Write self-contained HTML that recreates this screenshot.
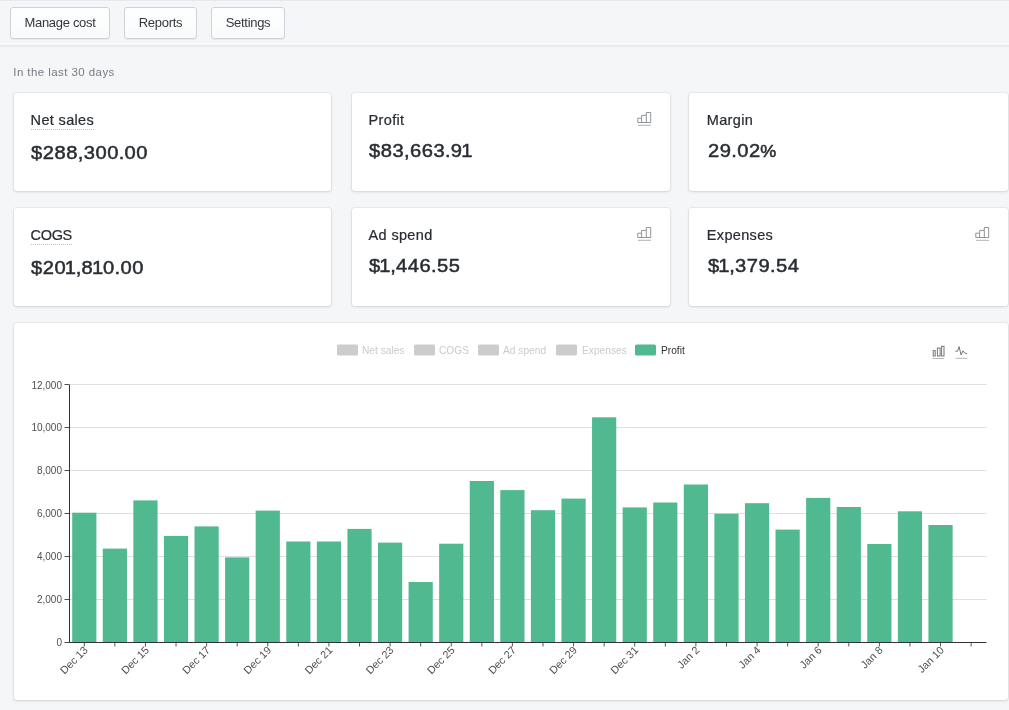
<!DOCTYPE html>
<html><head><meta charset="utf-8"><title>Dashboard</title>
<style>
html,body{margin:0;padding:0}
body{width:1009px;height:710px;overflow:hidden;background:#f4f6f8;font-family:"Liberation Sans",sans-serif;color:#292d32;position:relative}
.topline{position:absolute;left:0;top:0;width:1009px;height:1px;background:#e6e9ec}
.hdr{position:absolute;left:0;top:43px;width:1009px;height:4px;background:linear-gradient(180deg,rgba(255,255,255,.5) 0,rgba(255,255,255,.4) 1.4px,#e9ecef 2.1px,#e4e7eb 2.9px,#eceff2 3.6px,rgba(244,246,248,0) 4px)}
.btn{position:absolute;top:7px;height:31.5px;box-sizing:border-box;border:1px solid #cdd3d9;border-radius:3px;background:linear-gradient(180deg,#fff,#f9fafb);box-shadow:0 1px 0 0 rgba(22,29,37,.05);font-size:13px;line-height:30px;text-align:center;color:#33383e;letter-spacing:-.3px}
.btn span{display:inline-block;transform:translateY(.45px)}
.sub{position:absolute;left:13.3px;top:65px;font-size:11.5px;line-height:14px;color:#757c84;letter-spacing:.43px}
.card{position:absolute;background:#fff;border-radius:3px;box-shadow:0 0 0 1px rgba(63,63,68,.05),0 1px 3px 0 rgba(63,63,68,.15)}
.card .t{position:absolute;left:16.6px;top:19.1px;font-size:14.5px;line-height:17px;letter-spacing:.34px;color:#292d32;white-space:nowrap;-webkit-text-stroke:.22px #292d32}
.card .t.u{border-bottom:1.5px dotted #b9c1c9;padding-bottom:0}
.card .v{position:absolute;left:17.3px;font-size:19px;line-height:22px;letter-spacing:.5px;color:#292d32;white-space:nowrap;-webkit-text-stroke:.5px #292d32;transform:scaleX(1.06);transform-origin:0 50%}
.card .v i{font-style:normal;margin:0 -.7px 0 -1.3px}
.card .v u{text-decoration:none;margin:0 -.2px}
.card .v b{font-weight:normal;font-size:17px;margin-left:-.5px}
.c3 .t{left:17.8px}
.c3 .v{left:18.5px}
.ico{position:absolute;right:17px;top:18px}
.chart{position:absolute;left:0;top:0}
.wrap{position:absolute;left:0;top:0;width:1009px;height:710px;will-change:transform}
.yl{font-family:"Liberation Sans",sans-serif;font-size:10px;fill:#505050}
.xl{font-family:"Liberation Sans",sans-serif;font-size:10.7px;fill:#505050}
.lg{font-family:"Liberation Sans",sans-serif;font-size:10.2px}
</style></head><body>
<div class="wrap">
<div class="topline"></div>
<div class="btn" style="left:10px;width:100px"><span>Manage cost</span></div>
<div class="btn" style="left:124px;width:73px"><span>Reports</span></div>
<div class="btn" style="left:211px;width:74px"><span>Settings</span></div>
<div class="hdr"></div>
<div class="sub">In the last 30 days</div>

<div class="card" style="left:14px;top:93px;width:317px;height:98px"><div class="t u">Net sales</div><div class="v" style="top:48.6px">$288<u>,</u>300<u>.</u>00</div></div>
<div class="card" style="left:352px;top:93px;width:318px;height:98px"><div class="t">Profit</div><div class="v" style="top:47px">$83<u>,</u>663<u>.</u>9<i>1</i></div><svg class="ico" width="16" height="16" viewBox="0 0 16 16"><g stroke="#8a8f94" fill="none" stroke-width="0.95"><path d="M0.8 11.5V7.2H4.6V11.5M4.6 7.2V4.4H9.3V11.5M9.3 4.4V1.5H13.7V11.5H0.8"/><line x1="1" y1="14.3" x2="14" y2="14.3" stroke="#a9adb2"/></g></svg></div>
<div class="card c3" style="left:689px;top:93px;width:319px;height:98px"><div class="t">Margin</div><div class="v" style="top:47px">29<u>.</u>02<b>%</b></div></div>

<div class="card" style="left:14px;top:208px;width:317px;height:98px"><div class="t u" style="letter-spacing:-.35px">COGS</div><div class="v" style="top:48.6px">$20<i>1</i><u>,</u>8<i>1</i>0<u>.</u>00</div></div>
<div class="card" style="left:352px;top:208px;width:318px;height:98px"><div class="t">Ad spend</div><div class="v" style="top:47px">$<i>1</i><u>,</u>446<u>.</u>55</div><svg class="ico" width="16" height="16" viewBox="0 0 16 16"><g stroke="#8a8f94" fill="none" stroke-width="0.95"><path d="M0.8 11.5V7.2H4.6V11.5M4.6 7.2V4.4H9.3V11.5M9.3 4.4V1.5H13.7V11.5H0.8"/><line x1="1" y1="14.3" x2="14" y2="14.3" stroke="#a9adb2"/></g></svg></div>
<div class="card c3" style="left:689px;top:208px;width:319px;height:98px"><div class="t">Expenses</div><div class="v" style="top:47px">$<i>1</i><u>,</u>379<u>.</u>54</div><svg class="ico" width="16" height="16" viewBox="0 0 16 16"><g stroke="#8a8f94" fill="none" stroke-width="0.95"><path d="M0.8 11.5V7.2H4.6V11.5M4.6 7.2V4.4H9.3V11.5M9.3 4.4V1.5H13.7V11.5H0.8"/><line x1="1" y1="14.3" x2="14" y2="14.3" stroke="#a9adb2"/></g></svg></div>

<div class="card" style="left:14px;top:323px;width:994px;height:377px"></div>
<svg class="chart" width="1009" height="710" viewBox="0 0 1009 710">
<line x1="69.0" y1="384.50" x2="986.4" y2="384.50" stroke="#dfdfdf" stroke-width="1"/>
<line x1="64.5" y1="384.50" x2="69.0" y2="384.50" stroke="#3a3a3a" stroke-width="0.9"/>
<text x="62.0" y="388.60" text-anchor="end" class="yl">12,000</text>
<line x1="69.0" y1="427.50" x2="986.4" y2="427.50" stroke="#dfdfdf" stroke-width="1"/>
<line x1="64.5" y1="427.50" x2="69.0" y2="427.50" stroke="#3a3a3a" stroke-width="0.9"/>
<text x="62.0" y="431.43" text-anchor="end" class="yl">10,000</text>
<line x1="69.0" y1="470.50" x2="986.4" y2="470.50" stroke="#dfdfdf" stroke-width="1"/>
<line x1="64.5" y1="470.50" x2="69.0" y2="470.50" stroke="#3a3a3a" stroke-width="0.9"/>
<text x="62.0" y="474.27" text-anchor="end" class="yl">8,000</text>
<line x1="69.0" y1="513.50" x2="986.4" y2="513.50" stroke="#dfdfdf" stroke-width="1"/>
<line x1="64.5" y1="513.50" x2="69.0" y2="513.50" stroke="#3a3a3a" stroke-width="0.9"/>
<text x="62.0" y="517.10" text-anchor="end" class="yl">6,000</text>
<line x1="69.0" y1="556.50" x2="986.4" y2="556.50" stroke="#dfdfdf" stroke-width="1"/>
<line x1="64.5" y1="556.50" x2="69.0" y2="556.50" stroke="#3a3a3a" stroke-width="0.9"/>
<text x="62.0" y="559.93" text-anchor="end" class="yl">4,000</text>
<line x1="69.0" y1="599.50" x2="986.4" y2="599.50" stroke="#dfdfdf" stroke-width="1"/>
<line x1="64.5" y1="599.50" x2="69.0" y2="599.50" stroke="#3a3a3a" stroke-width="0.9"/>
<text x="62.0" y="602.77" text-anchor="end" class="yl">2,000</text>
<line x1="64.5" y1="642.50" x2="69.0" y2="642.50" stroke="#3a3a3a" stroke-width="0.9"/>
<text x="62.0" y="645.60" text-anchor="end" class="yl">0</text>
<rect x="72.19" y="512.70" width="24.2" height="129.30" fill="#50b990"/>
<rect x="102.77" y="548.60" width="24.2" height="93.40" fill="#50b990"/>
<rect x="133.35" y="500.40" width="24.2" height="141.60" fill="#50b990"/>
<rect x="163.93" y="535.90" width="24.2" height="106.10" fill="#50b990"/>
<rect x="194.51" y="526.40" width="24.2" height="115.60" fill="#50b990"/>
<rect x="225.09" y="557.40" width="24.2" height="84.60" fill="#50b990"/>
<rect x="255.67" y="510.60" width="24.2" height="131.40" fill="#50b990"/>
<rect x="286.25" y="541.50" width="24.2" height="100.50" fill="#50b990"/>
<rect x="316.83" y="541.50" width="24.2" height="100.50" fill="#50b990"/>
<rect x="347.41" y="528.90" width="24.2" height="113.10" fill="#50b990"/>
<rect x="377.99" y="542.60" width="24.2" height="99.40" fill="#50b990"/>
<rect x="408.57" y="582.00" width="24.2" height="60.00" fill="#50b990"/>
<rect x="439.15" y="543.70" width="24.2" height="98.30" fill="#50b990"/>
<rect x="469.73" y="481.00" width="24.2" height="161.00" fill="#50b990"/>
<rect x="500.31" y="490.10" width="24.2" height="151.90" fill="#50b990"/>
<rect x="530.89" y="510.20" width="24.2" height="131.80" fill="#50b990"/>
<rect x="561.47" y="498.60" width="24.2" height="143.40" fill="#50b990"/>
<rect x="592.05" y="417.30" width="24.2" height="224.70" fill="#50b990"/>
<rect x="622.63" y="507.40" width="24.2" height="134.60" fill="#50b990"/>
<rect x="653.21" y="502.50" width="24.2" height="139.50" fill="#50b990"/>
<rect x="683.79" y="484.50" width="24.2" height="157.50" fill="#50b990"/>
<rect x="714.37" y="513.70" width="24.2" height="128.30" fill="#50b990"/>
<rect x="744.95" y="503.20" width="24.2" height="138.80" fill="#50b990"/>
<rect x="775.53" y="529.60" width="24.2" height="112.40" fill="#50b990"/>
<rect x="806.11" y="497.90" width="24.2" height="144.10" fill="#50b990"/>
<rect x="836.69" y="507.00" width="24.2" height="135.00" fill="#50b990"/>
<rect x="867.27" y="544.00" width="24.2" height="98.00" fill="#50b990"/>
<rect x="897.85" y="511.30" width="24.2" height="130.70" fill="#50b990"/>
<rect x="928.43" y="525.00" width="24.2" height="117.00" fill="#50b990"/>
<line x1="69.5" y1="384.5" x2="69.5" y2="643.0" stroke="#333" stroke-width="1"/>
<line x1="69.0" y1="642.5" x2="986.4" y2="642.5" stroke="#333" stroke-width="1"/>
<line x1="84.29" y1="642.5" x2="84.29" y2="646.5" stroke="#3a3a3a" stroke-width="0.85"/>
<text transform="translate(88.49,650.8) rotate(-45)" text-anchor="end" class="xl">Dec 13</text>
<line x1="114.87" y1="642.5" x2="114.87" y2="646.5" stroke="#3a3a3a" stroke-width="0.85"/>
<line x1="145.45" y1="642.5" x2="145.45" y2="646.5" stroke="#3a3a3a" stroke-width="0.85"/>
<text transform="translate(149.65,650.8) rotate(-45)" text-anchor="end" class="xl">Dec 15</text>
<line x1="176.03" y1="642.5" x2="176.03" y2="646.5" stroke="#3a3a3a" stroke-width="0.85"/>
<line x1="206.61" y1="642.5" x2="206.61" y2="646.5" stroke="#3a3a3a" stroke-width="0.85"/>
<text transform="translate(210.81,650.8) rotate(-45)" text-anchor="end" class="xl">Dec 17</text>
<line x1="237.19" y1="642.5" x2="237.19" y2="646.5" stroke="#3a3a3a" stroke-width="0.85"/>
<line x1="267.77" y1="642.5" x2="267.77" y2="646.5" stroke="#3a3a3a" stroke-width="0.85"/>
<text transform="translate(271.97,650.8) rotate(-45)" text-anchor="end" class="xl">Dec 19</text>
<line x1="298.35" y1="642.5" x2="298.35" y2="646.5" stroke="#3a3a3a" stroke-width="0.85"/>
<line x1="328.93" y1="642.5" x2="328.93" y2="646.5" stroke="#3a3a3a" stroke-width="0.85"/>
<text transform="translate(333.13,650.8) rotate(-45)" text-anchor="end" class="xl">Dec 21</text>
<line x1="359.51" y1="642.5" x2="359.51" y2="646.5" stroke="#3a3a3a" stroke-width="0.85"/>
<line x1="390.09" y1="642.5" x2="390.09" y2="646.5" stroke="#3a3a3a" stroke-width="0.85"/>
<text transform="translate(394.29,650.8) rotate(-45)" text-anchor="end" class="xl">Dec 23</text>
<line x1="420.67" y1="642.5" x2="420.67" y2="646.5" stroke="#3a3a3a" stroke-width="0.85"/>
<line x1="451.25" y1="642.5" x2="451.25" y2="646.5" stroke="#3a3a3a" stroke-width="0.85"/>
<text transform="translate(455.45,650.8) rotate(-45)" text-anchor="end" class="xl">Dec 25</text>
<line x1="481.83" y1="642.5" x2="481.83" y2="646.5" stroke="#3a3a3a" stroke-width="0.85"/>
<line x1="512.41" y1="642.5" x2="512.41" y2="646.5" stroke="#3a3a3a" stroke-width="0.85"/>
<text transform="translate(516.61,650.8) rotate(-45)" text-anchor="end" class="xl">Dec 27</text>
<line x1="542.99" y1="642.5" x2="542.99" y2="646.5" stroke="#3a3a3a" stroke-width="0.85"/>
<line x1="573.57" y1="642.5" x2="573.57" y2="646.5" stroke="#3a3a3a" stroke-width="0.85"/>
<text transform="translate(577.77,650.8) rotate(-45)" text-anchor="end" class="xl">Dec 29</text>
<line x1="604.15" y1="642.5" x2="604.15" y2="646.5" stroke="#3a3a3a" stroke-width="0.85"/>
<line x1="634.73" y1="642.5" x2="634.73" y2="646.5" stroke="#3a3a3a" stroke-width="0.85"/>
<text transform="translate(638.93,650.8) rotate(-45)" text-anchor="end" class="xl">Dec 31</text>
<line x1="665.31" y1="642.5" x2="665.31" y2="646.5" stroke="#3a3a3a" stroke-width="0.85"/>
<line x1="695.89" y1="642.5" x2="695.89" y2="646.5" stroke="#3a3a3a" stroke-width="0.85"/>
<text transform="translate(700.09,650.8) rotate(-45)" text-anchor="end" class="xl">Jan 2</text>
<line x1="726.47" y1="642.5" x2="726.47" y2="646.5" stroke="#3a3a3a" stroke-width="0.85"/>
<line x1="757.05" y1="642.5" x2="757.05" y2="646.5" stroke="#3a3a3a" stroke-width="0.85"/>
<text transform="translate(761.25,650.8) rotate(-45)" text-anchor="end" class="xl">Jan 4</text>
<line x1="787.63" y1="642.5" x2="787.63" y2="646.5" stroke="#3a3a3a" stroke-width="0.85"/>
<line x1="818.21" y1="642.5" x2="818.21" y2="646.5" stroke="#3a3a3a" stroke-width="0.85"/>
<text transform="translate(822.41,650.8) rotate(-45)" text-anchor="end" class="xl">Jan 6</text>
<line x1="848.79" y1="642.5" x2="848.79" y2="646.5" stroke="#3a3a3a" stroke-width="0.85"/>
<line x1="879.37" y1="642.5" x2="879.37" y2="646.5" stroke="#3a3a3a" stroke-width="0.85"/>
<text transform="translate(883.57,650.8) rotate(-45)" text-anchor="end" class="xl">Jan 8</text>
<line x1="909.95" y1="642.5" x2="909.95" y2="646.5" stroke="#3a3a3a" stroke-width="0.85"/>
<line x1="940.53" y1="642.5" x2="940.53" y2="646.5" stroke="#3a3a3a" stroke-width="0.85"/>
<text transform="translate(944.73,650.8) rotate(-45)" text-anchor="end" class="xl">Jan 10</text>
<line x1="971.11" y1="642.5" x2="971.11" y2="646.5" stroke="#3a3a3a" stroke-width="0.85"/>
<rect x="337" y="344.5" width="21" height="11" rx="1.5" fill="#cccccc"/>
<text x="362" y="354" class="lg" fill="#cbcbcb">Net sales</text>
<rect x="414" y="344.5" width="21" height="11" rx="1.5" fill="#cccccc"/>
<text x="439" y="354" class="lg" fill="#cbcbcb">COGS</text>
<rect x="478" y="344.5" width="21" height="11" rx="1.5" fill="#cccccc"/>
<text x="503" y="354" class="lg" fill="#cbcbcb">Ad spend</text>
<rect x="556" y="344.5" width="21" height="11" rx="1.5" fill="#cccccc"/>
<text x="582" y="354" class="lg" fill="#cbcbcb">Expenses</text>
<rect x="635" y="344.5" width="21" height="11" rx="1.5" fill="#50b990"/>
<text x="661" y="354" class="lg" fill="#333">Profit</text>
<g stroke="#70757a" fill="none" stroke-width="1">
<rect x="933.2" y="350.6" width="2" height="5.4"/><rect x="937.4" y="348.1" width="2.7" height="7.9"/><rect x="941.6" y="346.3" width="2.4" height="9.7"/>
<line x1="932.5" y1="358.5" x2="944.2" y2="358.5" stroke="#b4b8bc"/>
<polyline points="955.4,351.4 957.6,351.1 959.1,346.6 961.1,355 962.9,350.8 964.6,352.9 967.2,353.8" stroke-linejoin="round"/>
<line x1="955.5" y1="358.3" x2="967.3" y2="358.3" stroke="#b4b8bc"/>
</g>
</svg>
</div>
</body></html>
